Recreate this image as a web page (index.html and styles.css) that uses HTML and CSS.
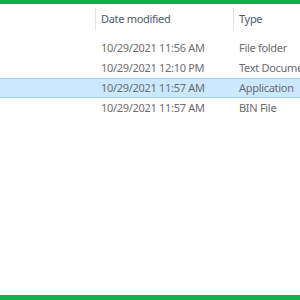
FILE: index.html
```
<html>
<head>
  <title>Explorer details view</title>
  <link rel="stylesheet" href="styles.css">
</head>
<body>
  <div class="frame">
    <!-- Column headers -->
    <div class="header">
      <div class="col name"></div>
      <div class="col date">Date modified</div>
      <div class="col type">Type</div>
    </div>

    <!-- File rows -->
    <div class="rows">
      <div class="row">
        <div class="col name"></div>
        <div class="col date">10/29/2021 11:56 AM</div>
        <div class="col type">File folder</div>
      </div>
      <div class="row">
        <div class="col name"></div>
        <div class="col date">10/29/2021 12:10 PM</div>
        <div class="col type">Text Document</div>
      </div>
      <div class="row selected">
        <div class="col name"></div>
        <div class="col date">10/29/2021 11:57 AM</div>
        <div class="col type">Application</div>
      </div>
      <div class="row">
        <div class="col name"></div>
        <div class="col date">10/29/2021 11:57 AM</div>
        <div class="col type">BIN File</div>
      </div>
    </div>
  </div>
</body>
</html>
```

FILE: styles.css
```
/* Page */
body {
  margin: 0;
  font-family: 'Noto Sans', 'Open Sans', sans-serif;
  font-size: 11px;
  letter-spacing: -0.3px;
  background: #fff;
  overflow: hidden;
}

/* Green frame top and bottom */
.frame {
  height: 100vh;
  box-sizing: border-box;
  border-top: 4px solid #12b04a;
  border-bottom: 5px solid #12b04a;
  display: flex;
  flex-direction: column;
  overflow: hidden;
}

/* Columns */
.col {
  flex: none;
  white-space: nowrap;
  overflow: hidden;
  box-sizing: border-box;
}

.name {
  width: 95px;
}

.date {
  width: 138px;
  padding-left: 5px;
}

.type {
  flex: 1;
  padding-left: 5px;
}

/* Header row */
.header {
  display: flex;
  margin-top: 4px;
  height: 22px;
  line-height: 22px;
  color: #4d5a6b;
}

.header .date,
.header .type {
  border-left: 1px solid #e5e5e5;
}

/* File rows */
.rows {
  margin-top: 8px;
  flex: 1;
}

.row {
  display: flex;
  height: 20px;
  line-height: 18px;
  color: #6d6d6d;
  box-sizing: border-box;
  border: 1px solid transparent;
  border-left: none;
  border-right: none;
}

.row .date,
.row .type {
  padding-left: 6px;
}

.row.selected {
  background: #cce8ff;
  border-color: #99d1ff;
}
```
